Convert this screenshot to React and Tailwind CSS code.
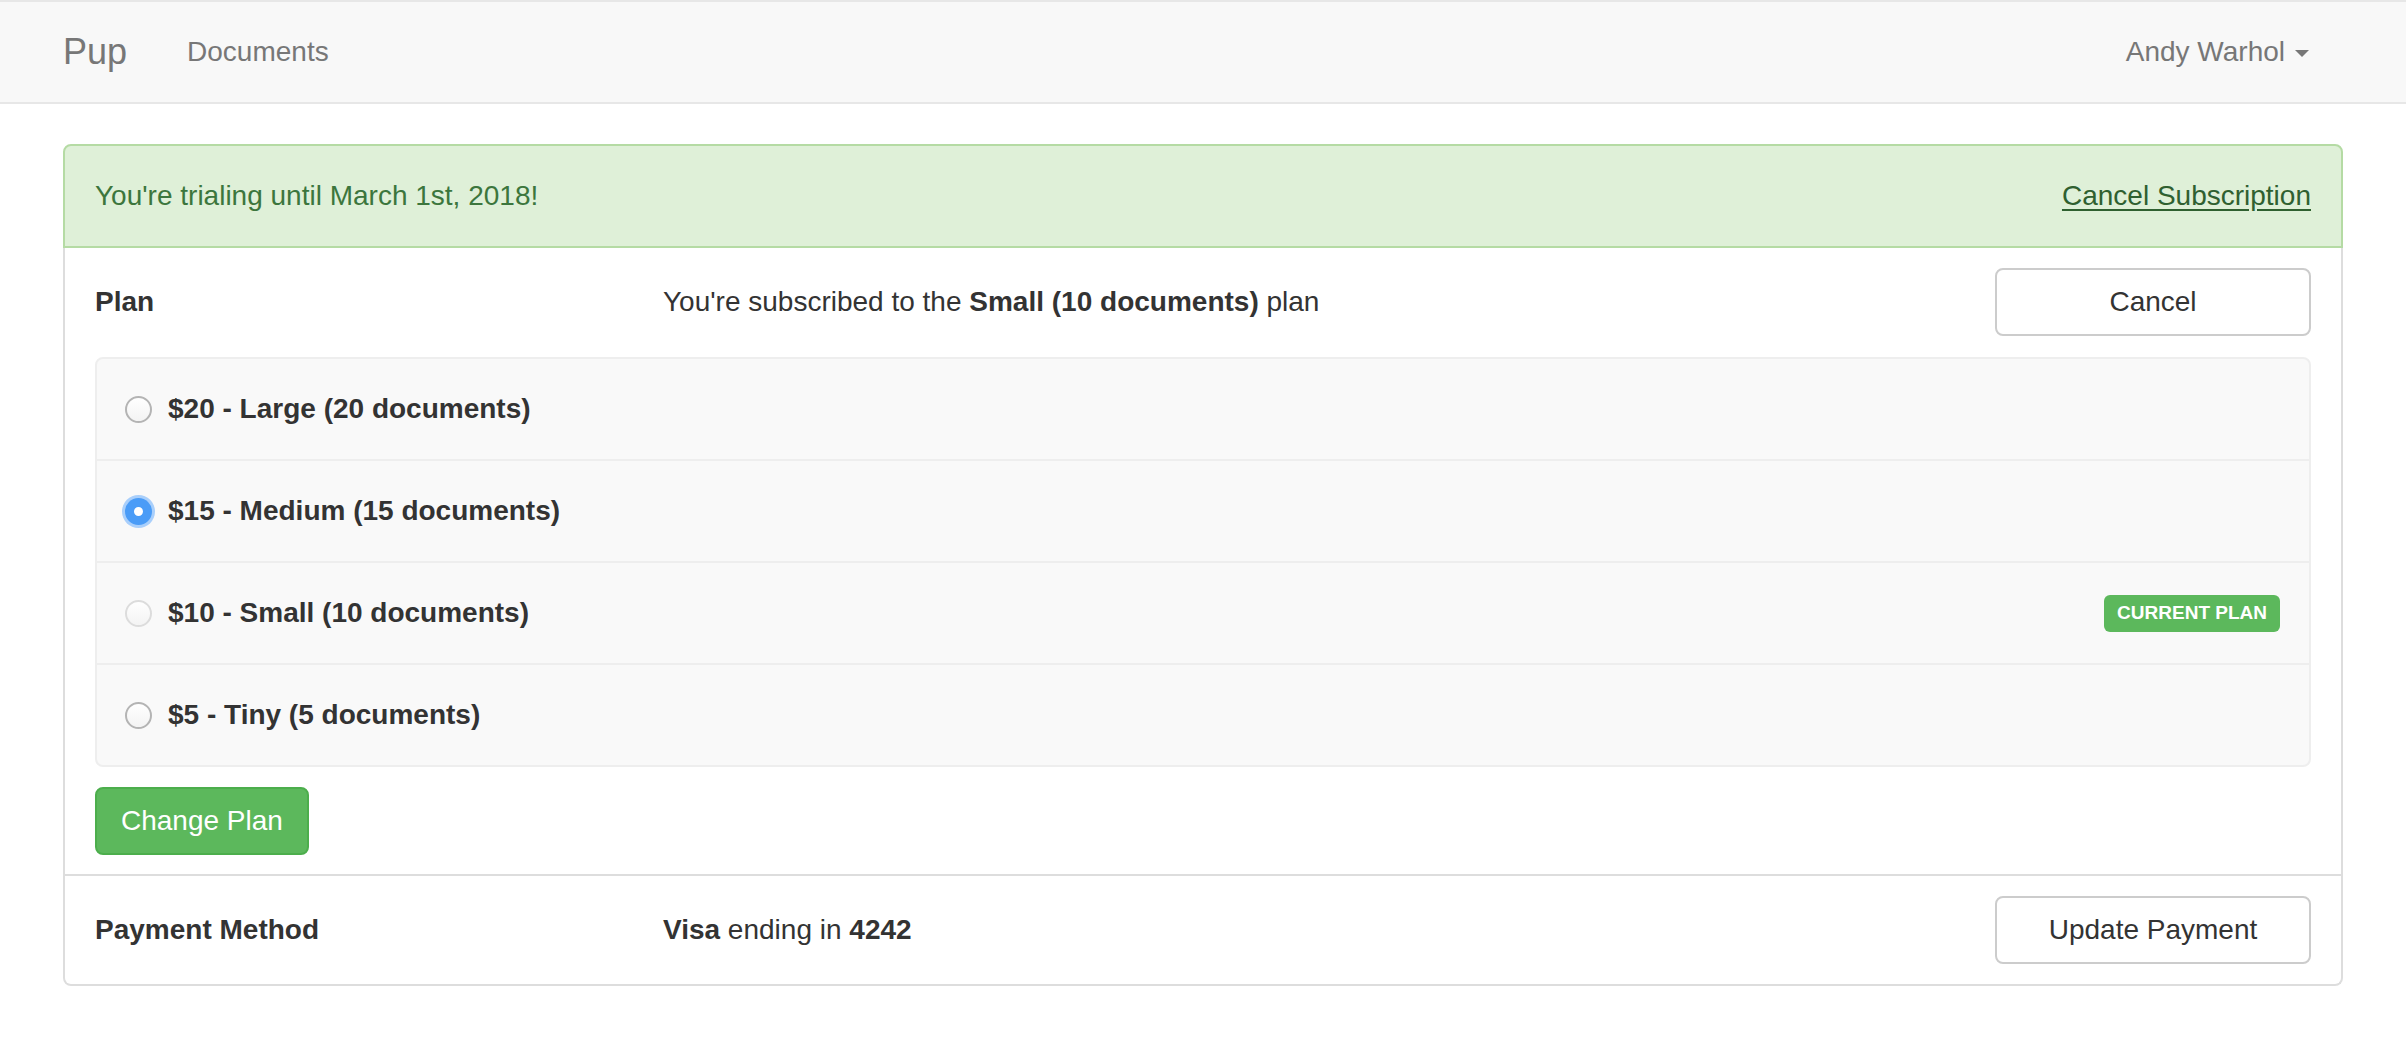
import React from "react";

function Radio({ state }) {
  if (state === "checked") {
    return (
      <span className="flex h-[27px] w-[27px] shrink-0 items-center justify-center rounded-full bg-[#4a9cf7] shadow-[0_0_0_3px_#a9cffb]">
        <span className="h-[9px] w-[9px] rounded-full bg-white" />
      </span>
    );
  }
  const border = state === "disabled" ? "border-[#dcdcdc]" : "border-[#b4b4b4]";
  return (
    <span
      className={`h-[27px] w-[27px] shrink-0 rounded-full border-2 bg-gradient-to-b from-white to-[#f3f3f3] ${border}`}
    />
  );
}

const plans = [
  { label: "$20 - Large (20 documents)", state: "normal" },
  { label: "$15 - Medium (15 documents)", state: "checked" },
  { label: "$10 - Small (10 documents)", state: "disabled", current: true },
  { label: "$5 - Tiny (5 documents)", state: "normal" },
];

export default function App() {
  return (
    <div className="min-h-screen bg-white font-['Liberation_Sans',Arial,sans-serif] text-[28px] leading-[40px] text-[#333]">
      <nav className="h-[104px] border-y-2 border-[#e7e7e7] bg-[#f8f8f8]">
        <div className="mx-auto flex h-full w-[2340px] items-center justify-between px-[30px]">
          <div className="flex items-center">
            <span className="text-[36px] text-[#777]">Pup</span>
            <span className="ml-[60px] text-[28px] text-[#777]">Documents</span>
          </div>
          <div className="mr-[34px] flex items-center text-[#777]">
            <span>Andy Warhol</span>
            <span className="ml-[10px] mt-[2px] h-0 w-0 border-x-[7px] border-t-[7px] border-x-transparent border-t-[#777]" />
          </div>
        </div>
      </nav>

      <div className="mx-auto mt-[40px] w-[2340px] px-[30px]">
        <div className="flex h-[104px] items-center justify-between rounded-t-[8px] border-2 border-[#b5dba4] bg-[#dff0d8] px-[30px] text-[#3c763d]">
          <span>You're trialing until March 1st, 2018!</span>
          <a className="text-[#2f6030] underline underline-offset-[4px]">Cancel Subscription</a>
        </div>

        <div className="rounded-b-[8px] border-x-2 border-b-2 border-[#ddd]">
          <div className="border-b-2 border-[#ddd] px-[30px] pb-[19px] pt-[20px]">
            <div className="flex items-center">
              <div className="w-[568px] font-bold">Plan</div>
              <div className="flex-1">
                You're subscribed to the <b>Small (10 documents)</b> plan
              </div>
              <button className="h-[68px] w-[316px] rounded-[8px] border-2 border-[#ccc] bg-white text-[#333]">
                Cancel
              </button>
            </div>

            <div className="mt-[21px] rounded-[8px] border-2 border-[#eee] bg-[#f9f9f9]">
              {plans.map((p, i) => (
                <div
                  key={p.label}
                  className={`flex items-center justify-between pl-[28px] pr-[29px] ${
                    i < plans.length - 1 ? "h-[102px] border-b-2 border-[#eee]" : "h-[100px]"
                  }`}
                >
                  <div className="flex items-center gap-[16px]">
                    <Radio state={p.state} />
                    <span className="font-bold">{p.label}</span>
                  </div>
                  {p.current && (
                    <span className="rounded-[6px] bg-[#5cb85c] px-[13px] pb-[8px] pt-[7px] text-[19px] font-bold leading-[22px] text-white">
                      CURRENT PLAN
                    </span>
                  )}
                </div>
              ))}
            </div>

            <button className="mt-[20px] h-[68px] rounded-[8px] border-2 border-[#4cae4c] bg-[#5cb85c] px-[24px] text-white">
              Change Plan
            </button>
          </div>

          <div className="flex items-center px-[30px] py-[20px]">
            <div className="w-[568px] font-bold">Payment Method</div>
            <div className="flex-1">
              <b>Visa</b> ending in <b>4242</b>
            </div>
            <button className="h-[68px] w-[316px] rounded-[8px] border-2 border-[#ccc] bg-white text-[#333]">
              Update Payment
            </button>
          </div>
        </div>
      </div>
    </div>
  );
}
